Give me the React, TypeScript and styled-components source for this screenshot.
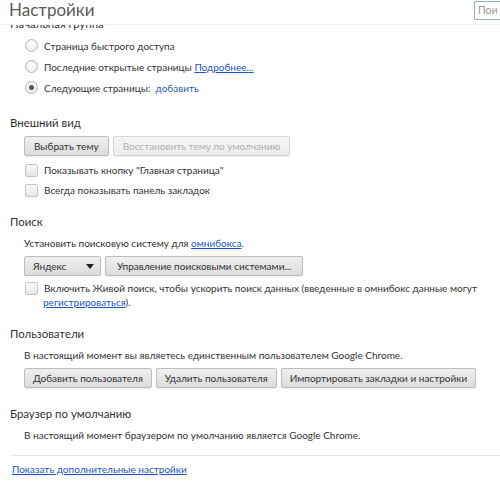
import React from "react";
import styled, { createGlobalStyle } from "styled-components";

const Global = createGlobalStyle`
  html, body { margin: 0; padding: 0; background: #fff; }
  body {
    width: 500px; height: 481px; overflow: hidden;
    font-family: Lato, "Noto Sans", "DejaVu Sans", sans-serif;
    font-size: 10px; color: #333;
  }
`;

const Page = styled.div`
  position: relative;
  width: 500px;
  height: 481px;
  overflow: hidden;
`;

const Header = styled.header`
  position: absolute;
  top: 0; left: 0; right: 0;
  height: 24px;
  background: #fff;
  border-bottom: 1px solid #f0f0f0;
  display: flex;
  align-items: center;
  justify-content: space-between;
  padding-left: 9px;
  z-index: 2;
`;

const Title = styled.h1`
  margin: 0;
  font-size: 17px;
  font-weight: 400;
  color: #5a5a5a;
  line-height: 22px;
  margin-top: -4px;
`;

const SearchBox = styled.input`
  width: 26px;
  height: 19px;
  margin-top: -4px;
  box-sizing: border-box;
  border: 1px solid #8fb0c6;
  border-right: none;
  border-radius: 2px 0 0 2px;
  font-family: inherit;
  font-size: 10.5px;
  padding: 0 3px;
  color: #999;
  &::placeholder { color: #999; }
`;

const Content = styled.main`
  padding: 16px 0 0 10px;
`;

const Section = styled.section<{ $gap?: number }>`
  margin-bottom: ${(p) => p.$gap ?? 17}px;
`;

const Heading = styled.h3`
  margin: 0 0 3px;
  font-size: 11.4px;
  font-weight: 400;
  color: #333;
  line-height: 16px;
`;

const Body = styled.div`
  padding-left: 14px;
  display: flex;
  flex-direction: column;
`;

const Row = styled.div<{ $h?: number }>`
  display: flex;
  align-items: center;
  height: ${(p) => p.$h ?? 21}px;
  gap: 6px;
  white-space: nowrap;
`;

const Radio = styled.span<{ $on?: boolean }>`
  width: 11px; height: 11px;
  border-radius: 50%;
  border: 1px solid #b8b8b8;
  background: radial-gradient(circle at 50% 40%, #fff 0%, #e6e6e6 100%);
  margin-left: 1px;
  display: inline-flex; align-items: center; justify-content: center;
  flex: none;
  &::after {
    content: "";
    width: 5px; height: 5px; border-radius: 50%;
    background: ${(p) => (p.$on ? "#555" : "transparent")};
  }
`;

const Check = styled.span`
  width: 11px; height: 11px;
  border: 1px solid #c4c4c4;
  border-radius: 2px;
  background: linear-gradient(#fafafa, #e6e6e6);
  flex: none;
  margin-left: 1px;
  margin-top: 1px;
`;

const Label = styled.span`
  line-height: 14px;
`;

const Link = styled.a<{ $plain?: boolean }>`
  color: ${(p) => (p.$plain ? "#2a5db0" : "#1a55c0")};
  text-decoration: ${(p) => (p.$plain ? "none" : "underline")};
  cursor: pointer;
`;

const Buttons = styled.div<{ $mt?: number; $mb?: number }>`
  display: flex;
  gap: 4px;
  margin: ${(p) => p.$mt ?? 2}px 0 ${(p) => p.$mb ?? 0}px;
`;

const Button = styled.button<{ $disabled?: boolean; $pad?: number }>`
  height: 20px;
  padding: 0 ${(p) => p.$pad ?? 9}px;
  white-space: nowrap;
  font-family: inherit;
  font-size: 10px;
  color: ${(p) => (p.$disabled ? "#b0b0b0" : "#333")};
  background: ${(p) => (p.$disabled ? "linear-gradient(#f6f6f6, #ececec)" : "linear-gradient(#f0f0f0, #dcdcdc)")};
  border: 1px solid ${(p) => (p.$disabled ? "#d6d6d6" : "#bdbdbd")};
  border-radius: 2px;
  box-shadow: 0 1px 0 rgba(0,0,0,0.06);
`;

const Select = styled.div`
  height: 20px;
  box-sizing: border-box;
  width: 77px;
  padding: 0 6px 0 8px;
  display: flex;
  align-items: center;
  justify-content: space-between;
  background: linear-gradient(#f0f0f0, #dcdcdc);
  border: 1px solid #bdbdbd;
  border-radius: 2px;
  color: #333;
  &::after {
    content: "";
    border-left: 4px solid transparent;
    border-right: 4px solid transparent;
    border-top: 5px solid #222;
  }
`;

const Indented = styled.div`
  padding-left: 19px;
  line-height: 14px;
  margin-top: -3px;
  white-space: nowrap;
`;

const Divider = styled.hr`
  border: none;
  border-top: 1px solid #e6e6e6;
  margin: 10px 0 0 0;
`;

const Footer = styled.div`
  padding: 6px 0 0 2px;
  line-height: 14px;
`;

export default function App() {
  return (
    <Page>
      <Global />
      <Header>
        <Title>Настройки</Title>
        <SearchBox placeholder="Поиск" />
      </Header>
      <Content>
        <Section $gap={17}>
          <Heading>Начальная группа</Heading>
          <Body>
            <Row><Radio /><Label>Страница быстрого доступа</Label></Row>
            <Row><Radio /><Label>Последние открытые страницы <Link>Подробнее...</Link></Label></Row>
            <Row><Radio $on /><Label>Следующие страницы:&nbsp; <Link $plain>добавить</Link></Label></Row>
          </Body>
        </Section>
        <Section $gap={15}>
          <Heading>Внешний вид</Heading>
          <Body>
            <Buttons $mt={2} $mb={4}>
              <Button>Выбрать тему</Button>
              <Button $disabled>Восстановить тему по умолчанию</Button>
            </Buttons>
            <Row $h={20}><Check /><Label>Показывать кнопку "Главная страница"</Label></Row>
            <Row $h={19}><Check /><Label>Всегда показывать панель закладок</Label></Row>
          </Body>
        </Section>
        <Section $gap={17}>
          <Heading>Поиск</Heading>
          <Body>
            <Row $h={20}><Label>Установить поисковую систему для <Link>омнибокса</Link>.</Label></Row>
            <Buttons $mt={3} $mb={2}>
              <Select>Яндекс</Select>
              <Button $pad={11}>Управление поисковыми системами...</Button>
            </Buttons>
            <Row $h={20}><Check /><Label>Включить Живой поиск, чтобы ускорить поиск данных (введенные в омнибокс данные могут</Label></Row>
            <Indented><Link>регистрироваться</Link>).</Indented>
          </Body>
        </Section>
        <Section $gap={18}>
          <Heading>Пользователи</Heading>
          <Body>
            <Row $h={20}><Label>В настоящий момент вы являетесь единственным пользователем Google Chrome.</Label></Row>
            <Buttons $mt={3}>
              <Button $pad={8}>Добавить пользователя</Button>
              <Button $pad={8}>Удалить пользователя</Button>
              <Button $pad={8}>Импортировать закладки и настройки</Button>
            </Buttons>
          </Body>
        </Section>
        <Section $gap={0}>
          <Heading>Браузер по умолчанию</Heading>
          <Body>
            <Row $h={20}><Label>В настоящий момент браузером по умолчанию является Google Chrome.</Label></Row>
          </Body>
        </Section>
        <Divider />
        <Footer><Link>Показать дополнительные настройки</Link></Footer>
      </Content>
    </Page>
  );
}
